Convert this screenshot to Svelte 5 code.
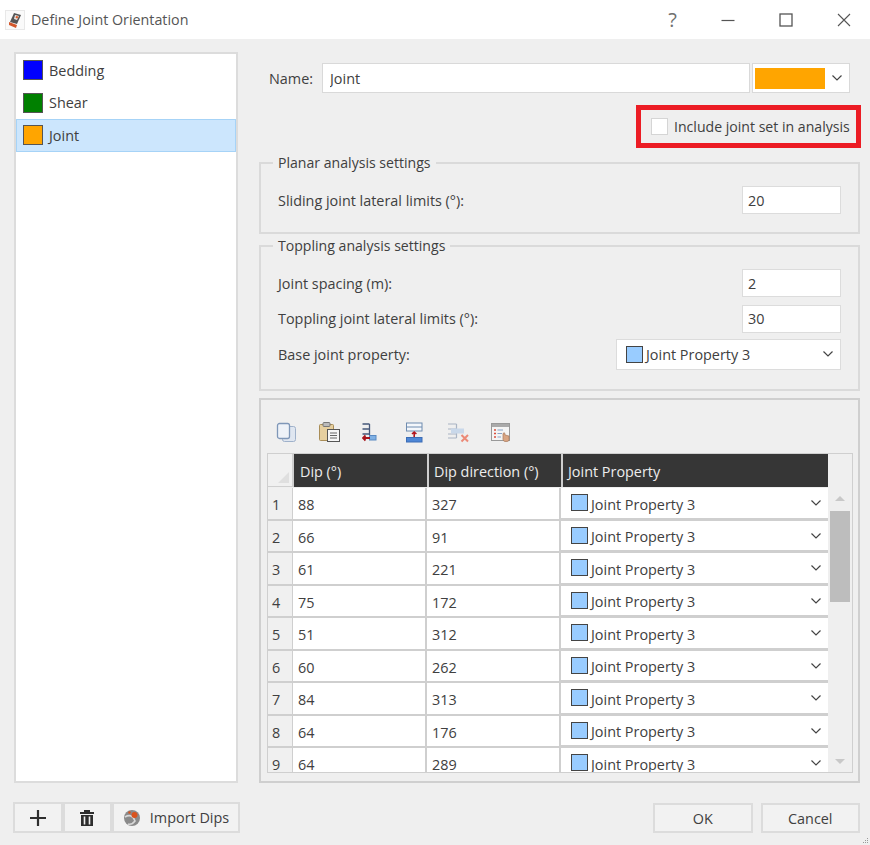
<script>
  const sets = [
    { name: 'Bedding', color: '#0000ff' },
    { name: 'Shear', color: '#008000' },
    { name: 'Joint', color: '#ffa500', selected: true }
  ];

  const dips = [
    [88, 327],
    [66, 91],
    [61, 221],
    [75, 172],
    [51, 312],
    [60, 262],
    [84, 313],
    [64, 176],
    [64, 289]
  ];
</script>

{#snippet chevron()}
  <svg class="chevron" width="12" height="8" viewBox="0 0 12 8">
    <path d="M1.5 1.5 L6 6 L10.5 1.5" fill="none" stroke="#444" stroke-width="1.2" />
  </svg>
{/snippet}

{#snippet propCombo()}
  <span class="prop-swatch"></span>
  <span class="prop-label">Joint Property 3</span>
  {@render chevron()}
{/snippet}

<div class="dialog">
  <header class="titlebar">
    <svg class="app-icon" width="20" height="20" viewBox="0 0 20 20">
      <rect x="0.5" y="0.5" width="19" height="19" fill="#fafafa" stroke="#e8e8e8" />
      <path d="M9 3 L16 5 L12 14 L5 12 Z" fill="#555" />
      <path d="M10 5 L14 6 L12 10 L9 9 Z" fill="#e8e8e8" />
      <path d="M4 12 L12 15 L11 18 L4 15 Z" fill="#d2562a" />
      <path d="M11 6 L13.5 6.5 L12.5 8.5 L10.5 8 Z" fill="#e0602c" />
    </svg>
    <span class="title">Define Joint Orientation</span>
    <div class="window-btns">
      <span class="help">?</span>
      <svg width="14" height="14" viewBox="0 0 14 14"><path d="M0.5 7.5 H13.5" stroke="#555" stroke-width="1.2" /></svg>
      <svg width="14" height="14" viewBox="0 0 14 14"><rect x="1" y="1" width="12" height="12" fill="none" stroke="#555" stroke-width="1.3" /></svg>
      <svg width="14" height="14" viewBox="0 0 14 14"><path d="M1 1 L13 13 M13 1 L1 13" stroke="#555" stroke-width="1.1" /></svg>
    </div>
  </header>

  <div class="main">
    <aside class="set-list">
      {#each sets as set}
        <div class="set-row" class:selected={set.selected}>
          <span class="set-swatch" style="background: {set.color}"></span>
          <span>{set.name}</span>
        </div>
      {/each}
    </aside>

    <section class="form">
      <div class="name-row">
        <label for="set-name">Name:</label>
        <input id="set-name" type="text" value="Joint" />
        <div class="color-combo">
          <span class="color-fill"></span>
          {@render chevron()}
        </div>
      </div>

      <div class="include-row">
        <div class="include-box">
          <span class="checkbox"></span>
          <span>Include joint set in analysis</span>
        </div>
      </div>

      <fieldset class="planar">
        <legend>Planar analysis settings</legend>
        <div class="field-row">
          <span>Sliding joint lateral limits (°):</span>
          <span class="num-input">20</span>
        </div>
      </fieldset>

      <fieldset class="toppling">
        <legend>Toppling analysis settings</legend>
        <div class="field-row">
          <span>Joint spacing (m):</span>
          <span class="num-input">2</span>
        </div>
        <div class="field-row">
          <span>Toppling joint lateral limits (°):</span>
          <span class="num-input">30</span>
        </div>
        <div class="field-row">
          <span>Base joint property:</span>
          <span class="base-combo">{@render propCombo()}</span>
        </div>
      </fieldset>

      <div class="table-panel">
        <div class="toolbar">
          <svg width="22" height="22" viewBox="0 0 22 22">
            <rect x="6.5" y="5.5" width="13" height="15" rx="2" fill="#dfe6f0" stroke="#9fb1ca" />
            <rect x="1.5" y="2.5" width="12" height="15" rx="2" fill="#eef2f8" stroke="#7f97b8" stroke-width="1.3" />
          </svg>
          <svg width="22" height="22" viewBox="0 0 22 22">
            <rect x="0.5" y="3.5" width="14" height="16" rx="1" fill="#e6cf9f" stroke="#a98d57" />
            <rect x="4" y="1.5" width="7" height="4" rx="1" fill="#bbb" stroke="#777" />
            <rect x="8.5" y="8.5" width="12" height="12" fill="#f6f6f6" stroke="#555" />
            <path d="M11 12 H18 M11 14.5 H18 M11 17 H18" stroke="#666" />
          </svg>
          <svg width="22" height="22" viewBox="0 0 22 22">
            <path d="M0.5 3 H7.5 M0.5 8 H7.5 M0.5 13 H7.5 M7.5 3 V14" stroke="#46587a" stroke-width="1.3" fill="none" />
            <rect x="7.5" y="14.5" width="6.5" height="4.5" fill="#7fb0e4" stroke="#5a8ac2" />
            <path d="M1 17 H8 M3.5 14.5 L1 17 L3.5 19.5" stroke="#a8141c" stroke-width="1.8" fill="none" />
          </svg>
          <svg width="22" height="22" viewBox="0 0 22 22">
            <rect x="1.5" y="2" width="15.5" height="8" fill="#f4f7fb" stroke="#6f8cb0" />
            <path d="M2 6 H17" stroke="#6f8cb0" />
            <path d="M9.2 16 V11 M7 13 L9.2 11 L11.4 13" stroke="#b3161e" stroke-width="1.6" fill="none" />
            <rect x="1.5" y="16.5" width="15.5" height="4.5" fill="#4d86d6" stroke="#3c6db5" />
          </svg>
          <svg width="22" height="22" viewBox="0 0 22 22">
            <path d="M0 3 H8.5 M0 8 H8.5 M0 13 H8.5 M0 17 H8.5 M8.5 3 V17" stroke="#a9b4c4" stroke-width="1.2" fill="none" />
            <rect x="3" y="7.5" width="13" height="5" fill="#c9d8ea" />
            <path d="M13.5 14 L20 20.5 M20 14 L13.5 20.5" stroke="#ec8a78" stroke-width="2" />
          </svg>
          <svg width="22" height="22" viewBox="0 0 22 22">
            <rect x="0.5" y="2.5" width="18" height="17" fill="#f5f5f5" stroke="#999" />
            <rect x="1" y="3" width="17" height="3" fill="#aaa" />
            <path d="M3 9 H5 M3 12.5 H5 M3 16 H5" stroke="#d9503f" stroke-width="1.5" />
            <path d="M6.5 9 H12 M6.5 12.5 H11 M6.5 16 H10" stroke="#8aa5c8" stroke-width="1.2" />
            <path d="M12 18.5 V12.5 Q13.2 11 14 12.5 V14 L18 15 V18.5 Q18 20.5 16 20.5 H14 Q12.5 20.5 12 18.5 Z" fill="#d9a583" stroke="#a97a5b" stroke-width="0.7" />
          </svg>
        </div>

        <div class="grid-frame">
          <div class="grid">
            <div class="corner"><span class="corner-mark"></span></div>
            <div class="head">Dip (°)</div>
            <div class="head">Dip direction (°)</div>
            <div class="head">Joint Property</div>
            {#each dips as [dip, direction], i}
              <div class="row-num">{i + 1}</div>
              <div class="cell">{dip}</div>
              <div class="cell">{direction}</div>
              <div class="cell combo-cell">{@render propCombo()}</div>
            {/each}
          </div>
          <div class="scrollbar">
            <span class="arrow up"></span>
            <span class="thumb"></span>
            <span class="arrow down"></span>
          </div>
        </div>
      </div>
    </section>
  </div>

  <footer class="footer">
    <div class="tool-btns">
      <button class="tool-btn">
        <svg width="20" height="20" viewBox="0 0 20 20"><path d="M10 2 V18 M2 10 H18" stroke="#2e2e2e" stroke-width="2.2" /></svg>
      </button>
      <button class="tool-btn">
        <svg width="16" height="18" viewBox="0 0 16 18">
          <path d="M1 3 H5 V1 H11 V3 H15 V5 H1 Z M2 6 H14 V17 H2 Z" fill="#2e2e2e" />
          <path d="M5.5 7.5 V15.5 M10.5 7.5 V15.5" stroke="#f0f0f0" stroke-width="1.6" />
        </svg>
      </button>
      <button class="tool-btn import-btn">
        <svg width="18" height="18" viewBox="0 0 18 18">
          <circle cx="9" cy="9" r="8" fill="#8a8a8a" />
          <path d="M2 8 Q9 4 12 12 Q9 16 5 15" fill="none" stroke="#d8d8d8" stroke-width="1.6" />
          <circle cx="11.5" cy="6" r="3" fill="#d9531e" />
          <circle cx="6.5" cy="3.5" r="1.2" fill="#d9531e" />
        </svg>
        <span>Import Dips</span>
      </button>
    </div>
    <div class="dialog-btns">
      <button class="dialog-btn">OK</button>
      <button class="dialog-btn">Cancel</button>
    </div>
  </footer>

  <svg class="size-grip" width="8" height="8" viewBox="0 0 8 8">
    <path d="M6 1 h1 v1 h-1 Z M4 3 h1 v1 h-1 Z M6 3 h1 v1 h-1 Z M2 5 h1 v1 h-1 Z M4 5 h1 v1 h-1 Z M6 5 h1 v1 h-1 Z" fill="#999" />
  </svg>
</div>

<style>
  :global(body) {
    margin: 0;
  }

  .dialog {
    position: relative;
    width: 870px;
    height: 845px;
    background: #efefef;
    color: #404040;
    font-family: "Open Sans", "Noto Sans", sans-serif;
    font-size: 14.4px;
    display: flex;
    flex-direction: column;
    overflow: hidden;
  }

  .titlebar {
    height: 39px;
    background: #fff;
    display: flex;
    align-items: center;
    padding-left: 5px;
    flex-shrink: 0;
  }

  .app-icon {
    margin-right: 6px;
  }

  .title {
    color: #555;
    font-size: 14.3px;
  }

  .window-btns {
    margin-left: auto;
    display: flex;
    align-items: center;
    gap: 44px;
    padding-right: 19px;
  }

  .help {
    font-size: 20px;
    line-height: 24px;
    color: #707070;
  }

  .main {
    display: flex;
    gap: 21px;
    padding: 13px 10px 0 14px;
    height: 731px;
  }

  .set-list {
    width: 220px;
    height: 727px;
    border: 2px solid #dcdcdc;
    background: #fff;
    flex-shrink: 0;
  }

  .set-row {
    height: 32.5px;
    display: flex;
    align-items: center;
    gap: 6px;
    padding-left: 7px;
    box-sizing: border-box;
  }

  .set-row.selected {
    background: #cce6fd;
    border: 1px solid #a6d3f7;
    padding-left: 6px;
  }

  .set-swatch {
    width: 18px;
    height: 18px;
    border: 1px solid #555;
  }

  .form {
    flex: 1;
    display: flex;
    flex-direction: column;
    min-width: 0;
  }

  .name-row {
    display: flex;
    align-items: center;
    height: 30px;
    margin: 11px 10px 0 10px;
  }

  .name-row label {
    width: 53px;
  }

  .name-row input {
    width: 428px;
    height: 30px;
    box-sizing: border-box;
    border: 1px solid #d9d9d9;
    background: #fff;
    padding: 0 7px;
    font: inherit;
    color: inherit;
    outline: none;
  }

  .color-combo {
    width: 98px;
    height: 30px;
    margin-left: 2px;
    background: #fff;
    border: 1px solid #d9d9d9;
    box-sizing: border-box;
    display: flex;
    align-items: center;
    padding-left: 2px;
  }

  .color-fill {
    width: 70px;
    height: 21px;
    background: #ffa500;
  }

  .color-combo .chevron {
    margin-left: 6px;
  }

  .include-row {
    display: flex;
    justify-content: flex-end;
    margin-top: 12px;
    margin-right: -1px;
    margin-bottom: 7px;
  }

  .include-box {
    width: 225px;
    height: 43px;
    box-sizing: border-box;
    border: 5px solid #ec1c24;
    display: flex;
    align-items: center;
    padding-left: 10px;
    gap: 6px;
    font-size: 14.1px;
  }

  .checkbox {
    width: 15px;
    height: 15px;
    background: #fff;
    border: 1px solid #d5d5d5;
  }

  fieldset {
    margin: 0;
    padding: 0 17px;
    border: 2px solid #dadada;
    box-sizing: border-box;
    min-width: 0;
  }

  legend {
    padding: 0 5px;
    margin-left: -5px;
    line-height: 16px;
    font-size: 14.1px;
  }

  .planar {
    height: 79px;
    margin-bottom: 4px;
    padding-top: 11.5px;
  }

  .toppling {
    height: 153px;
    padding-top: 11.5px;
    margin-bottom: 7px;
  }

  .field-row {
    display: flex;
    align-items: center;
    justify-content: space-between;
    height: 35.5px;
  }

  .num-input {
    width: 99px;
    height: 28px;
    box-sizing: border-box;
    background: #fff;
    border: 1px solid #dcdcdc;
    padding-left: 5px;
    display: flex;
    align-items: center;
  }

  .base-combo {
    width: 225px;
    height: 31px;
    box-sizing: border-box;
    background: #fff;
    border: 1px solid #dcdcdc;
    display: flex;
    align-items: center;
    padding-left: 9px;
  }

  .prop-swatch {
    width: 15px;
    height: 15px;
    background: #99ccff;
    border: 1px solid #444;
    flex-shrink: 0;
  }

  .prop-label {
    margin-left: 3px;
  }

  .chevron {
    flex-shrink: 0;
  }

  .base-combo .chevron,
  .combo-cell .chevron {
    margin-left: auto;
    margin-right: 6px;
  }

  .table-panel {
    height: 385px;
    box-sizing: border-box;
    border: 2px solid #cfcfcf;
    padding: 18px 6px 0 6px;
  }

  .toolbar {
    display: flex;
    align-items: center;
    gap: 21px;
    height: 27px;
    padding-left: 9px;
    margin-bottom: 8px;
  }

  .grid-frame {
    display: flex;
    border: 1px solid #cfcfcf;
    height: 318px;
    overflow: hidden;
    width: 584px;
  }

  .grid {
    display: grid;
    grid-template-columns: 25px 134px 134px 267px;
    grid-template-rows: 34px;
    grid-auto-rows: 32.5px;
    align-content: start;
    flex-shrink: 0;
  }

  .corner {
    background: #f0f0f0;
    border-right: 1px solid #cfcfcf;
    border-bottom: 1px solid #cfcfcf;
    position: relative;
    height: 33px;
    box-sizing: border-box;
  }

  .corner-mark {
    position: absolute;
    right: 3px;
    bottom: 3px;
    border-style: solid;
    border-width: 0 0 11px 11px;
    border-color: transparent transparent #dfdfdf transparent;
  }

  .head {
    background: #363636;
    color: #ededed;
    display: flex;
    align-items: center;
    padding: 2px 0 0 6px;
    border-left: 1px solid #cfcfcf;
    box-sizing: border-box;
    height: 33px;
  }

  .head + .head {
    border-left-width: 2px;
    padding-left: 5px;
  }

  .row-num {
    background: #f0f0f0;
    display: flex;
    align-items: center;
    padding: 3px 0 0 4px;
    border-right: 1px solid #cfcfcf;
    border-bottom: 2px solid #cfcfcf;
    box-sizing: border-box;
  }

  .cell {
    background: #fff;
    display: flex;
    align-items: center;
    padding: 3px 0 0 5px;
    border-right: 2px solid #cfcfcf;
    border-bottom: 2px solid #cfcfcf;
    box-sizing: border-box;
  }

  .combo-cell {
    padding-left: 10px;
    border-right: 0;
    border-bottom: 3px solid #cfcfcf;
  }

  .combo-cell .prop-swatch {
    margin-top: -3px;
  }

  .combo-cell .chevron {
    margin-top: -2px;
  }

  .scrollbar {
    flex: 1;
    background: #efefef;
    display: flex;
    flex-direction: column;
    align-items: center;
    padding-top: 42px;
    padding-bottom: 8px;
    box-sizing: border-box;
  }

  .arrow {
    border-left: 5px solid transparent;
    border-right: 5px solid transparent;
  }

  .arrow.up {
    border-bottom: 5px solid #c8c8c8;
  }

  .arrow.down {
    border-top: 5px solid #c8c8c8;
    margin-top: auto;
  }

  .thumb {
    width: 20px;
    height: 91px;
    background: #bdbdbd;
    margin-top: 10px;
  }

  .footer {
    display: flex;
    justify-content: space-between;
    padding: 19px 10px 0 13px;
  }

  .tool-btns,
  .dialog-btns {
    display: flex;
  }

  .dialog-btns {
    gap: 8px;
    margin-top: 1px;
  }

  button {
    font: inherit;
    color: inherit;
    background: #f2f2f2;
    border: 2px solid #dcdcdc;
    padding: 0;
    height: 30px;
    box-sizing: border-box;
    display: flex;
    align-items: center;
    justify-content: center;
  }

  .tool-btn {
    width: 49.5px;
    height: 31px;
  }

  .import-btn {
    width: 128px;
    gap: 9px;
  }

  .dialog-btn {
    width: 99.5px;
  }

  .size-grip {
    position: absolute;
    right: 1px;
    bottom: 0;
  }
</style>
